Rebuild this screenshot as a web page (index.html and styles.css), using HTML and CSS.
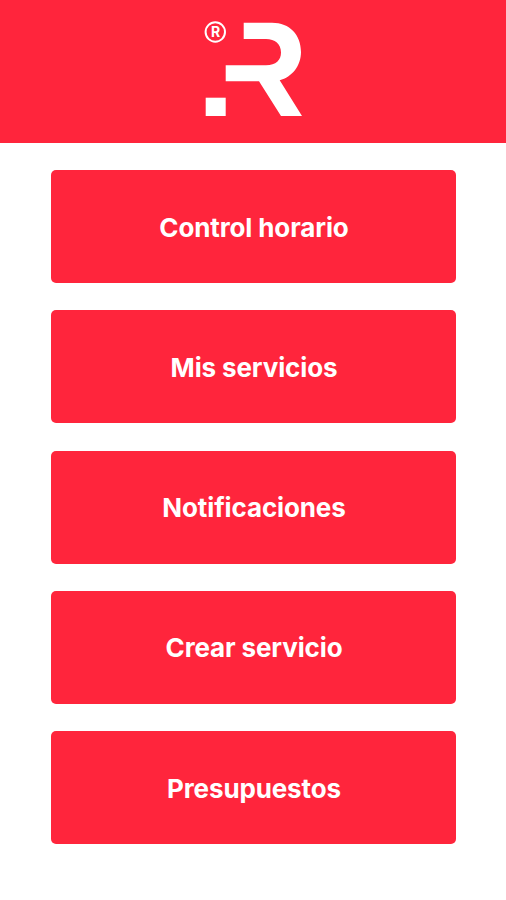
FILE: index.html
```html
<!DOCTYPE html>
<html lang="es">
<head>
<meta charset="utf-8">
<title>Inicio</title>
<link rel="stylesheet" href="styles.css">
</head>
<body>
<header class="header">
<svg class="logo" viewBox="0 0 98 96" aria-hidden="true">
<circle class="ring" cx="11.3" cy="11" r="9.7"/>
<text class="mark" x="11.5" y="16">R</text>
<path d="M39.7 1.7H68C86 1.7 97 14 97 31C97 45 88 56 75.7 59.3L98 95H77L55 60.3H21.7V44.3H62C72 44.3 77 39 77 31.5C77 23 71 18 62 18H39.7Z"/>
<path d="M1.7 76.7H21.7V95H1.7Z"/>
</svg>
</header>
<main class="menu">
<button class="item">Control horario</button>
<button class="item">Mis servicios</button>
<button class="item">Notificaciones</button>
<button class="item">Crear servicio</button>
<button class="item">Presupuestos</button>
</main>
</body>
</html>
```

FILE: styles.css
```css
body { margin: 0; background: #fff; font-family: Inter, sans-serif; }
.header { height: 143px; background: #ff253c; display: flex; justify-content: center; box-sizing: border-box; padding-top: 21px; }
.logo { width: 98px; height: 96px; fill: #fff; }
.ring { fill: none; stroke: #fff; stroke-width: 2; }
.mark { font: 700 14px Inter, sans-serif; text-anchor: middle; }
.menu { display: flex; flex-direction: column; gap: 27.3px; padding: 27px 50px 0 51px; }
.item { height: 113px; border: 0; border-radius: 5px; background: #ff253c; color: #fff; font: 700 26px Inter, sans-serif; letter-spacing: -0.13px; padding: 1px 0 0 1px; }
```
